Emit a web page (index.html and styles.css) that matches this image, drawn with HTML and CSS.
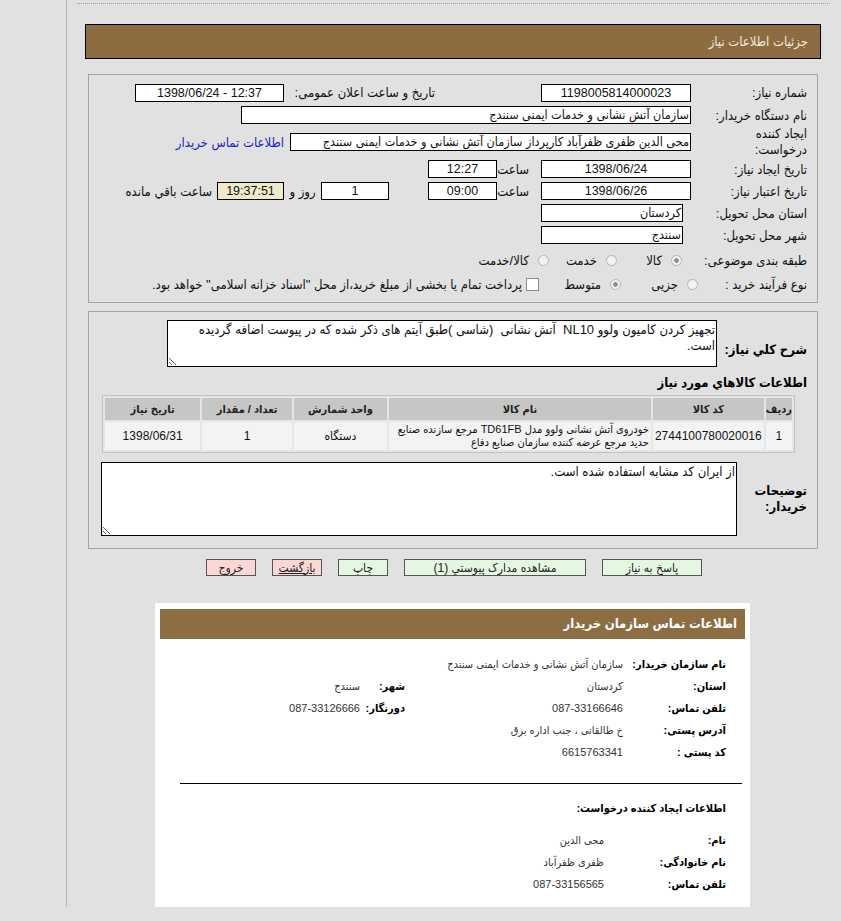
FILE: index.html
```html
<!DOCTYPE html>
<html lang="fa" dir="rtl">
<head>
  <meta charset="UTF-8">
  <meta name="viewport" content="width=device-width, initial-scale=1.0">
  <title>جزئیات اطلاعات نیاز</title>
  <link rel="stylesheet" href="styles.css">
</head>
<body>
  <div class="page">
    <div class="top-rule"></div>

    <div class="title-bar">جزئیات اطلاعات نیاز</div>

    <!-- main info -->
    <div class="panel info-panel">
      <div class="row row-first">
        <div class="lbl">شماره نیاز:</div>
        <div class="field w150">1198005814000023</div>
        <div class="lbl lbl-announce">تاریخ و ساعت اعلان عمومی:</div>
        <div class="field w149" dir="ltr">1398/06/24 - 12:37</div>
      </div>
      <div class="row">
        <div class="lbl">نام دستگاه خریدار:</div>
        <div class="field w450 text-start">سازمان آتش نشانی و خدمات ایمنی سنندج</div>
      </div>
      <div class="row row-tall">
        <div class="lbl lbl-two">ایجاد کننده<br>درخواست:</div>
        <div class="field w401 text-start">محی الدین ظفری ظفرآباد کارپرداز سازمان آتش نشانی و خدمات ایمنی سنندج</div>
        <a class="contact-link" href="#contact">اطلاعات تماس خریدار</a>
      </div>
      <div class="row">
        <div class="lbl">تاریخ ایجاد نیاز:</div>
        <div class="field w150">1398/06/24</div>
        <div class="sub-lbl">ساعت</div>
        <div class="field w69">12:27</div>
      </div>
      <div class="row">
        <div class="lbl">تاریخ اعتبار نیاز:</div>
        <div class="field w150">1398/06/26</div>
        <div class="sub-lbl">ساعت</div>
        <div class="field w69">09:00</div>
        <div class="field w68 days">1</div>
        <div class="days-lbl">روز و</div>
        <div class="field w67 remain">19:37:51</div>
        <div class="remain-lbl">ساعت باقي مانده</div>
      </div>
      <div class="row">
        <div class="lbl lbl-wide">استان محل تحویل:</div>
        <div class="field w142 text-start">کردستان</div>
      </div>
      <div class="row">
        <div class="lbl lbl-wide">شهر محل تحویل:</div>
        <div class="field w142 text-start">سنندج</div>
      </div>
      <div class="row row-radio">
        <div class="lbl">طبقه بندی موضوعی:</div>
        <label class="opt opt-a"><input type="radio" name="cat" checked disabled><span>کالا</span></label>
        <label class="opt opt-b"><input type="radio" name="cat" disabled><span>خدمت</span></label>
        <label class="opt"><input type="radio" name="cat" disabled><span>کالا/خدمت</span></label>
      </div>
      <div class="row row-last">
        <div class="lbl lbl-narrow">نوع فرآیند خرید :</div>
        <label class="opt opt-c"><input type="radio" name="proc" disabled><span>جزیی</span></label>
        <label class="opt opt-d"><input type="radio" name="proc" checked disabled><span>متوسط</span></label>
        <label class="opt opt-check"><input type="checkbox" disabled><span>پرداخت تمام یا بخشی از مبلغ خرید،از محل "اسناد خزانه اسلامی" خواهد بود.</span></label>
      </div>
    </div>

    <!-- description and goods -->
    <div class="panel goods-panel">
      <div class="desc-row">
        <div class="bold-lbl desc-lbl">شرح كلي نياز:</div>
        <textarea class="memo memo-desc" readonly>تجهیز کردن کامیون ولوو NL10  آتش نشانی  (شاسی )طبق آیتم های ذکر شده که در پیوست اضافه گردیده است.</textarea>
      </div>

      <div class="bold-lbl goods-title">اطلاعات كالاهاي مورد نياز</div>

      <table class="goods">
        <thead>
          <tr>
            <th class="c-row">رديف</th>
            <th class="c-code">کد کالا</th>
            <th class="c-name">نام کالا</th>
            <th class="c-unit">واحد شمارش</th>
            <th class="c-qty">تعداد / مقدار</th>
            <th class="c-date">تاریخ نیاز</th>
          </tr>
        </thead>
        <tbody>
          <tr>
            <td>1</td>
            <td>2744100780020016</td>
            <td class="name-cell">خودروی آتش نشانی ولوو مدل TD61FB مرجع سازنده صنایع حدید مرجع عرضه کننده سازمان صنایع دفاع</td>
            <td>دستگاه</td>
            <td>1</td>
            <td>1398/06/31</td>
          </tr>
        </tbody>
      </table>

      <div class="note-row">
        <div class="bold-lbl note-lbl">توضیحات خریدار:</div>
        <textarea class="memo memo-note" readonly>از ایران کد مشابه استفاده شده است.</textarea>
      </div>
    </div>

    <div class="actions">
      <button class="btn btn-green w100">پاسخ به نیاز</button>
      <button class="btn btn-green w182">مشاهده مدارک پیوستي (1)</button>
      <button class="btn btn-green w50">چاپ</button>
      <button class="btn btn-pink w50 underline">بازگشت</button>
      <button class="btn btn-pink w50">خروج</button>
    </div>

    <!-- buyer contact -->
    <div class="contact" id="contact">
      <div class="contact-head">اطلاعات تماس سازمان خریدار</div>

      <div class="c-grid">
        <div class="c-line">
          <div class="c-lbl">نام سازمان خریدار:</div>
          <div class="c-val">سازمان آتش نشانی و خدمات ایمنی سنندج</div>
        </div>
        <div class="c-line">
          <div class="c-lbl">استان:</div>
          <div class="c-val c-val-half">کردستان</div>
          <div class="c-lbl2">شهر:</div>
          <div class="c-val">سنندج</div>
        </div>
        <div class="c-line">
          <div class="c-lbl">تلفن تماس:</div>
          <div class="c-val c-val-half">087-33166646</div>
          <div class="c-lbl2">دورنگار:</div>
          <div class="c-val">087-33126666</div>
        </div>
        <div class="c-line">
          <div class="c-lbl">آدرس پستی:</div>
          <div class="c-val">خ طالقانی ، جنب اداره برق</div>
        </div>
        <div class="c-line">
          <div class="c-lbl">کد پستی :</div>
          <div class="c-val">6615763341</div>
        </div>
      </div>

      <hr class="c-rule">

      <div class="c-sub">اطلاعات ایجاد کننده درخواست:</div>

      <div class="c-grid c-grid-2">
        <div class="c-line">
          <div class="c-lbl">نام:</div>
          <div class="c-val">محی الدین</div>
        </div>
        <div class="c-line">
          <div class="c-lbl">نام خانوادگی:</div>
          <div class="c-val">ظفری ظفرآباد</div>
        </div>
        <div class="c-line">
          <div class="c-lbl">تلفن تماس:</div>
          <div class="c-val">087-33156565</div>
        </div>
      </div>
    </div>
  </div>
</body>
</html>
```

FILE: styles.css
```css
body {
  margin: 0;
  background-color: #e1e1e1;
  color: #111;
  font-family: "Liberation Sans", "DejaVu Sans Condensed", "DejaVu Sans", sans-serif;
  font-size: 13px;
}

.page {
  margin-left: 66px;
  border-left: 1px solid #b3b3b3;
  height: 907px;
  padding-top: 3px;
  box-sizing: border-box;
}

.top-rule {
  margin: 0 11px 0 10px;
  border-top: 1px dotted #9a9a9a;
}

.title-bar {
  margin: 20px 20px 0 18px;
  height: 35px;
  box-sizing: border-box;
  border: 1px solid #000;
  background-color: #8c6d42;
  color: #f3ead9;
  padding-right: 12px;
  line-height: 33px;
}

.panel {
  margin: 15px 23px 0 21px;
  border: 1px solid #a3a3a3;
  padding-right: 10px;
}

/* info rows */
.info-panel {
  padding-top: 6px;
  padding-bottom: 8px;
}

.row {
  display: flex;
  align-items: center;
  height: 22px;
}

.row-first {
  height: 23px;
}

.row-tall {
  height: 32px;
}

.row-radio {
  height: 28px;
}

.row-last {
  height: 20px;
}

.lbl {
  width: 116px;
  flex-shrink: 0;
  white-space: nowrap;
}

.lbl-wide {
  width: 124px;
}

.lbl-narrow {
  width: 107px;
}

.lbl-two {
  line-height: 16px;
  white-space: normal;
}

.lbl-announce {
  width: 143px;
  margin-right: 106px;
  padding-left: 8px;
}

.field {
  height: 18px;
  box-sizing: border-box;
  border: 1px solid #000;
  background-color: #fff;
  font-size: 12.5px;
  line-height: 16px;
  text-align: center;
  padding: 0 2px;
  white-space: nowrap;
  overflow: hidden;
  flex-shrink: 0;
}

.text-start {
  text-align: right;
  padding: 0 1px;
}

.w150 { width: 150px; }
.w149 { width: 149px; }
.w450 { width: 450px; }
.w401 { width: 401px; }
.w142 { width: 142px; }
.w69 { width: 69px; }
.w68 { width: 68px; }
.w67 { width: 67px; }

.contact-link {
  margin-right: 6px;
  color: #2323c4;
  text-decoration: none;
  white-space: nowrap;
}

.sub-lbl {
  width: 44px;
  box-sizing: border-box;
  padding-right: 12px;
}

.days {
  margin-right: 39px;
}

.days-lbl {
  width: 37px;
  text-align: center;
}

.remain {
  background-color: #efebca;
}

.remain-lbl {
  margin-right: 5px;
  white-space: nowrap;
}

/* radios and checkbox */
.opt {
  display: flex;
  align-items: center;
  gap: 9px;
  white-space: nowrap;
  flex-shrink: 0;
}

.opt input {
  appearance: none;
  margin: 0;
  width: 11px;
  height: 11px;
  border: 1px solid #b5b5b5;
  border-radius: 50%;
  background-color: #f2f2f2;
}

.opt input:checked {
  background: radial-gradient(circle, #8c8c8c 0 2px, #f2f2f2 2.5px);
}

.opt input[type="checkbox"] {
  width: 13px;
  height: 13px;
  border-radius: 0;
  border-color: #8e8e8e;
  background-color: #fff;
}

.opt-a {
  width: 65px;
  margin-right: 9px;
}

.opt-b {
  width: 68px;
}

.opt-c {
  width: 77px;
  margin-right: 2px;
}

.opt-d {
  width: 82px;
}

.opt-check {
  gap: 4px;
}

/* goods panel */
.goods-panel {
  margin-top: 8px;
  padding-top: 8px;
  padding-bottom: 12px;
}

.bold-lbl {
  font-weight: bold;
  font-size: 13px;
  color: #000;
}

.desc-row {
  display: flex;
  align-items: center;
}

.desc-lbl {
  width: 90px;
  padding-top: 12px;
  flex-shrink: 0;
}

.memo {
  box-sizing: border-box;
  border: 1px solid #000;
  background-color: #fff;
  font-family: inherit;
  font-size: 13px;
  line-height: 16px;
  color: #111;
  padding: 1px 1px;
  margin: 0;
  outline: none;
}

.memo-desc {
  width: 550px;
  height: 47px;
}

.goods-title {
  margin-top: 8px;
  line-height: 16px;
}

.goods {
  margin: 4px 12px 0 0;
  width: 693px;
  border: 1px solid #c2c2c2;
  border-spacing: 2px;
  background-color: #e6e6e6;
}

.goods th {
  background-color: #c6c6c6;
  font-size: 11px;
  font-weight: bold;
  color: #222;
  height: 22px;
  padding: 0;
}

.goods td {
  background-color: #f3f3f3;
  height: 28px;
  padding: 0 2px;
  text-align: center;
  font-size: 12px;
  line-height: 13px;
}

.goods td.name-cell {
  text-align: right;
  font-size: 11px;
}

.c-row { width: 18px; }
.c-code { width: 102px; }
.c-name { width: 274px; }
.c-unit { width: 96px; }
.c-qty { width: 93px; }
.c-date { width: 97px; }

.note-row {
  display: flex;
  align-items: center;
  margin-top: 9px;
}

.note-lbl {
  width: 70px;
  line-height: 16px;
  flex-shrink: 0;
}

.memo-note {
  width: 636px;
  height: 74px;
}

/* buttons */
.actions {
  display: flex;
  justify-content: center;
  gap: 16px;
  margin-top: 10px;
}

.btn {
  height: 17px;
  box-sizing: border-box;
  border: 1px solid #555;
  font-family: inherit;
  font-size: 12px;
  color: #222;
  padding: 0;
  line-height: 14px;
}

.btn-green {
  background-color: #e4f8e1;
}

.btn-pink {
  background-color: #fdd6d6;
}

.underline {
  text-decoration: underline;
}

.w100 { width: 100px; }
.w182 { width: 182px; }
.w50 { width: 50px; }

/* contact box */
.contact {
  margin: 27px 91px 0 88px;
  background-color: #fff;
  padding: 6px 5px 14px 5px;
  font-size: 11px;
}

.contact-head {
  height: 30px;
  background-color: #8d6d42;
  color: #fff;
  font-weight: bold;
  font-size: 13px;
  line-height: 30px;
  padding-right: 8px;
}

.c-grid {
  margin-top: 14px;
  padding-right: 19px;
}

.c-line {
  display: flex;
  align-items: center;
  height: 22px;
}

.c-lbl {
  width: 103px;
  font-weight: bold;
  color: #000;
  flex-shrink: 0;
}

.c-lbl2 {
  width: 45px;
  font-weight: bold;
  color: #000;
}

.c-val {
  color: #333;
  font-size: 11px;
  white-space: nowrap;
}

.c-val-half {
  width: 218px;
}

.c-rule {
  margin: 20px 3px 0 20px;
  border: 0;
  border-top: 1px solid #000;
}

.c-sub {
  margin-top: 16px;
  padding-right: 19px;
  font-weight: bold;
  color: #000;
  line-height: 16px;
}

.c-grid-2 {
  margin-top: 13px;
}

.c-grid-2 .c-lbl {
  width: 122px;
}
```
